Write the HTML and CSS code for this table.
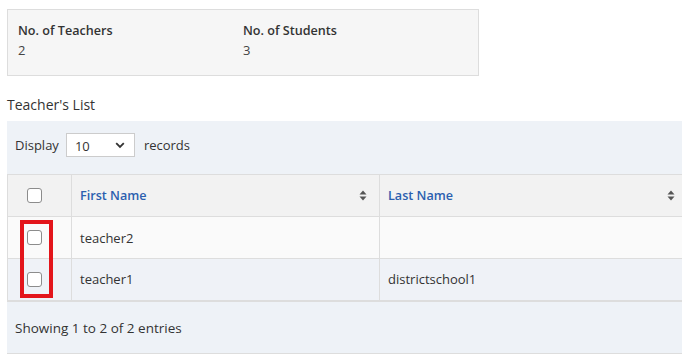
FILE: index.html
```html
<!DOCTYPE html>
<html>
<head>
<meta charset="utf-8">
<link rel="stylesheet" href="styles.css">
</head>
<body>
<div class="stats">
  <div class="stat">
    <div class="stat-label">No. of Teachers</div>
    <div class="stat-value">2</div>
  </div>
  <div class="stat">
    <div class="stat-label">No. of Students</div>
    <div class="stat-value">3</div>
  </div>
</div>
<div class="list-title">Teacher's List</div>
<div class="panel">
  <div class="toolbar">
    <span>Display</span>
    <div class="select"><span>10</span>
      <svg width="10" height="7" viewBox="0 0 10 7"><path d="M1.2 1.2 L5 5 L8.8 1.2" fill="none" stroke="#333" stroke-width="1.8"/></svg>
    </div>
    <span>records</span>
  </div>
  <div class="table-wrap">
    <table class="grid">
      <thead>
        <tr>
          <th class="col-check"><span class="cb"></span></th>
          <th class="col-first"><div class="th-inner"><span>First Name</span><svg class="sort" width="8" height="11" viewBox="0 0 8 11"><path d="M4 0.5 L7.5 4.5 L0.5 4.5 Z M4 10.5 L7.5 6.5 L0.5 6.5 Z" fill="#555"/></svg></div></th>
          <th class="col-last"><div class="th-inner"><span>Last Name</span><svg class="sort" width="8" height="11" viewBox="0 0 8 11"><path d="M4 0.5 L7.5 4.5 L0.5 4.5 Z M4 10.5 L7.5 6.5 L0.5 6.5 Z" fill="#555"/></svg></div></th>
        </tr>
      </thead>
      <tbody>
        <tr class="odd">
          <td class="col-check"><span class="cb"></span></td>
          <td>teacher2</td>
          <td></td>
        </tr>
        <tr class="even">
          <td class="col-check"><span class="cb"></span></td>
          <td>teacher1</td>
          <td>districtschool1</td>
        </tr>
      </tbody>
    </table>
    <div class="highlight"></div>
  </div>
  <div class="footer">Showing 1 to 2 of 2 entries</div>
</div>
</body>
</html>
```
FILE: styles.css
```css
html, body {
  margin: 0;
  padding: 0;
  overflow: hidden;
  background: #ffffff;
}
body {
  padding: 9px 0 0 7px;
  font-family: "Open Sans", "Noto Sans", sans-serif;
  font-size: 13px;
  color: #333333;
  width: 682px;
  box-sizing: border-box;
}
.stats {
  width: 472px;
  height: 67px;
  box-sizing: border-box;
  border: 1px solid #dddddd;
  background: #f6f6f6;
  padding: 10px 10px 0 10px;
  display: flex;
}
.stat {
  width: 225px;
  line-height: 20px;
}
.stat-label {
  font-weight: 600;
  font-size: 12.6px;
  padding-top: 1px;
  line-height: 19px;
  color: #333333;
}
.stat-value {
  color: #444444;
}
.list-title {
  margin-top: 19px;
  line-height: 20px;
  margin-bottom: 6px;
  font-size: 14px;
  color: #333333;
}
.panel {
  width: 681px;
  background: #eef2f7;
}
.toolbar {
  display: flex;
  align-items: center;
  height: 53px;
  box-sizing: border-box;
  padding: 12px 8px 17px 8px;
}
.toolbar > span:first-child {
  margin-right: 7px;
}
.select {
  width: 69px;
  height: 24px;
  box-sizing: border-box;
  border: 1px solid #cccccc;
  background: #ffffff;
  display: flex;
  align-items: center;
  justify-content: space-between;
  padding: 2px 9px 0 8px;
  margin-right: 9px;
  font-size: 13px;
  color: #333333;
}
.select svg {
  margin-top: -1px;
}
.table-wrap {
  position: relative;
}
.grid {
  width: 100%;
  border-collapse: collapse;
  table-layout: fixed;
}
.grid th, .grid td {
  border-left: 1px solid #dddddd;
  border-right: 1px solid #dddddd;
  padding: 0 8px;
  text-align: left;
  height: 42px;
  box-sizing: border-box;
}
.grid thead tr {
  background: #f2f2f2;
  border-top: 1px solid #dddddd;
}
.grid thead th {
  border-bottom: 1px solid #dddddd;
  color: #2b5faf;
  font-weight: 600;
  font-size: 12.6px;
}
.grid tbody td {
  border-bottom: 1px solid #dddddd;
}
.grid tbody tr:last-child td {
  border-bottom: 2px solid #dddddd;
}
.grid tbody tr.odd {
  background: #fafafa;
}
.grid tbody tr.even {
  background: #eff2f7;
}
.col-check {
  width: 64px;
}
.col-first {
  width: 308px;
}
.grid th.col-check, .grid td.col-check {
  padding: 0 0 0 19px;
}
.cb {
  display: block;
  width: 15px;
  height: 15px;
  box-sizing: border-box;
  border: 1px solid #8c8c8c;
  border-radius: 3px;
  background: #ffffff;
}
.th-inner {
  display: flex;
  align-items: center;
  justify-content: space-between;
  padding-right: 4px;
}
.sort {
  display: block;
}
.highlight {
  position: absolute;
  left: 13px;
  top: 46px;
  width: 33px;
  height: 78px;
  box-sizing: border-box;
  border: 4px solid #e3151b;
}
.footer {
  height: 52px;
  box-sizing: border-box;
  border-bottom: 1px solid #dddddd;
  padding: 1px 8px 0 8px;
  display: flex;
  align-items: center;
  font-size: 13.5px;
  color: #333333;
}
```
